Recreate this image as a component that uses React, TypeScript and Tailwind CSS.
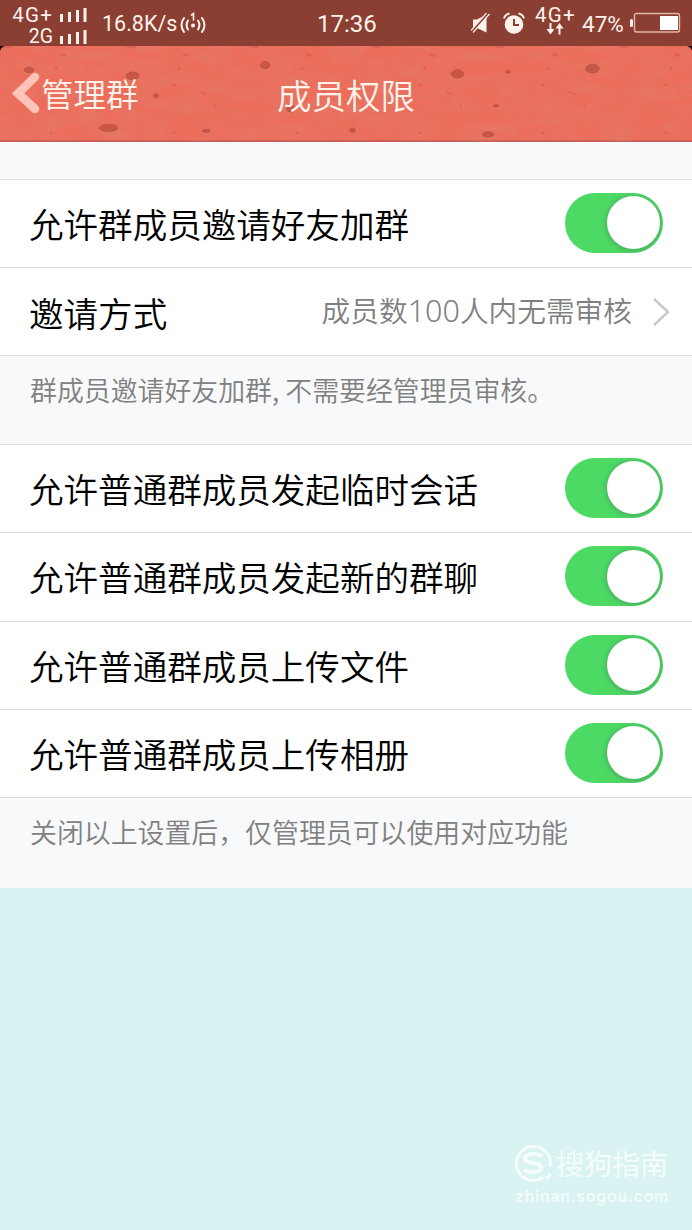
import React from "react";

const CJK = "font-['Noto_Sans_CJK_SC',sans-serif]";

const spots: [number, number, number, number][] = [
  [29, 70, 5, 3], [132.5, 76, 6.5, 4], [156, 96, 2.6, 2.3], [108.7, 128, 9.3, 3.8], [206, 131, 4.3, 1.6],
  [265, 65.3, 4.8, 3.8], [291, 109, 4.3, 3.3], [352.5, 130.3, 2.8, 2.4], [457.5, 74, 6.3, 4.3],
  [508, 72, 2.3, 1.6], [496, 106, 2.8, 1.4], [488, 134.5, 5.8, 2.8], [592.5, 68.7, 7, 4.5],
];

function Texture() {
  const tiles = [0, 123, 246, 369, 492, 615];
  return (
    <svg className="absolute inset-0" width="692" height="96" viewBox="0 46 692 96" aria-hidden="true">
      <defs>
        <filter id="grain" x="0" y="0" width="100%" height="100%">
          <feTurbulence type="fractalNoise" baseFrequency="0.03 0.08" numOctaves="3" seed="4" />
          <feColorMatrix values="0 0 0 0 0.65  0 0 0 0 0.3  0 0 0 0 0.25  0.4 0 0 0 -0.12" />
        </filter>
      </defs>
      <rect y="46" width="692" height="96" filter="url(#grain)" />
      <g fill="#c65443" opacity=".42">
        {tiles.map((x) => (
          <g key={x}>
            <ellipse cx={x + 63} cy="55" rx="3.5" ry="1.4" transform={`rotate(18 ${x + 63} 55)`} />
            <circle cx={x + 56} cy="68.5" r="1.6" />
            <circle cx={x + 51} cy="85" r="1.5" />
            <ellipse cx={x + 80} cy="93" rx="4.5" ry=".8" transform={`rotate(25 ${x + 80} 93)`} />
            <circle cx={x + 92} cy="106" r="1.2" />
            <circle cx={x + 51} cy="133" r="1.3" />
            <ellipse cx={x + 8} cy="47" rx="5" ry="1" />
          </g>
        ))}
      </g>
      {spots.map(([x, y, rx, ry]) => (
        <g key={`${x}-${y}`} opacity=".8">
          <ellipse cx={x} cy={y + 0.9} rx={rx + 0.3} ry={ry} fill="#f39079" opacity=".8" />
          <ellipse cx={x} cy={y} rx={rx} ry={ry} fill="#bf5041" stroke="#ab4a3c" strokeWidth=".7" />
        </g>
      ))}
      <path d="M0 46h5Q1 47 0 51Z" fill="#1c0505" />
      <path d="M692 46h-5q4 1 5 5Z" fill="#1c0505" />
    </svg>
  );
}

function Bars() {
  return (
    <svg className="shrink-0" width="28" height="14" viewBox="0 0 28 14" fill="#fff2ec">
      <rect x="0" y="6" width="3" height="8" />
      <rect x="8" y="4" width="3" height="10" />
      <rect x="16" y="2" width="3" height="12" />
      <rect x="23.5" y="0" width="3" height="14" />
    </svg>
  );
}

function StatusBar() {
  return (
    <div className="flex h-[46px] bg-[#8a3f32] font-[Roboto,sans-serif] text-[#fff2ec]">
      <div className="ml-[7px] w-[81px] pt-[4px]">
        <div className="flex h-[22px] items-center justify-end gap-[7px] text-[20.5px] leading-[22px] tracking-[1.2px]">
          <span>4G+</span><Bars />
        </div>
        <div className="flex h-[22px] items-center justify-end gap-[7px] text-[19.5px] leading-[22px]">
          <span>2G</span><Bars />
        </div>
      </div>
      <span className="ml-[14px] w-[76px] whitespace-nowrap pt-[11px] text-[21.5px] leading-[26px]">16.8K/s</span>
      <svg className="mt-[11px] ml-[1px]" width="28" height="24" viewBox="0 0 28 24" fill="none" stroke="#fff2ec" strokeWidth="2" strokeLinecap="round">
        <path d="M9 9.500q-2.800 4.500 0 9M5 7q-5 7 0 14M19 9.500q2.800 4.500 0 9M23 7q5 7 0 14" />
        <path d="M12.500 4 14.500 2.500V9" strokeWidth="1.600" />
        <circle cx="14" cy="14.500" r="2" fill="#fff2ec" stroke="none" />
      </svg>
      <span className="ml-[110px] w-[62px] pt-[11px] text-[24px] leading-[27px]">17:36</span>
      <svg className="mt-[13px] ml-[92px]" width="20" height="20" viewBox="0 0 20 20">
        <path d="M2 6.500h4l9.500-5v18L6 15H2Z" fill="#fff2ec" />
        <path d="M0 19.500 17 0" stroke="#8a3f32" strokeWidth="3" />
        <path d="M2 19.500 18.500 1M0 17.500 15.500 0" stroke="#fff2ec" strokeWidth="1.200" />
      </svg>
      <svg className="mt-[12px] ml-[12px]" width="22" height="23" viewBox="0 0 22 23">
        <circle cx="11" cy="12.500" r="9.300" fill="#fff2ec" />
        <path d="M1 6.500q1-4 5.500-5M21 6.500q-1-4-5.500-5" fill="none" stroke="#fff2ec" strokeWidth="1.800" />
        <path d="M11 7v6h5" fill="none" stroke="#8a3f32" strokeWidth="2" />
      </svg>
      <div className="ml-[10px] flex w-[43px] flex-col items-start pt-[5px]">
        <span className="text-[20.5px] leading-[20px] tracking-[1.3px]">4G+</span>
        <svg className="-mt-[2px] ml-[11px]" width="18" height="12" viewBox="0 0 18 12" fill="#fff2ec">
          <path d="M3.500 0h2v6h3L4.500 11.500 .5 6h3ZM12.500 11.500h2V5.500h3L13.500 0l-4 5.500h3Z" />
        </svg>
      </div>
      <span className="ml-[4px] w-[44px] pt-[11px] text-[22.5px] leading-[26px]">47%</span>
      <svg className="mt-[12px] ml-[4px]" width="52" height="22" viewBox="0 0 52 22">
        <rect x="0" y="7" width="3" height="8" rx="1.500" fill="#fff2ec" />
        <rect x="4.500" y="1.500" width="45" height="18.500" rx="2" fill="none" stroke="#e3b5aa" strokeWidth="1.400" />
        <rect x="30" y="4" width="18" height="14" fill="#fff" />
      </svg>
    </div>
  );
}

function Header() {
  return (
    <header className="relative h-[96px] border-b-2 border-[#cf5a4f] bg-[#ec6d5a]">
      <Texture />
      <div className={`${CJK} relative grid h-full grid-cols-3 items-center font-[350] text-[#fff3ec]`}>
        <div className="flex items-center pl-[10px]">
          <svg width="31" height="46" viewBox="0 0 31 46" fill="none">
            <path d="M25 7 8 23.500l17 15.500" stroke="#ffc4b7" strokeWidth="8.500" strokeLinecap="round" strokeLinejoin="miter" />
          </svg>
          <span className="whitespace-nowrap text-[32.5px] leading-[40px]">管理群</span>
        </div>
        <h1 className="whitespace-nowrap pt-[2px] text-center text-[34.5px] leading-[40px]">成员权限</h1>
      </div>
    </header>
  );
}

function Toggle() {
  return (
    <button role="switch" aria-checked="true" className="mb-[2px] flex h-[60px] w-[98px] shrink-0 items-center justify-end overflow-hidden rounded-full bg-[#4cd964] pr-[3px]">
      <span className="h-[53px] w-[53px] rounded-full bg-white shadow-[0_1px_5px_1px_rgba(70,90,80,0.35)]" />
    </button>
  );
}

function Row({ label, className = "", children }: { label: string; className?: string; children: React.ReactNode }) {
  return (
    <div className={`flex items-center justify-between border-t border-[#dcdddf] pl-[29px] ${className}`}>
      <span className="mb-[2px] whitespace-nowrap text-[34.55px] leading-[50px] font-[350] text-black">{label}</span>
      {children}
    </div>
  );
}

export default function App() {
  return (
    <div className="h-[1230px] w-[692px] overflow-hidden bg-[#d9f3f3]">
      <StatusBar />
      <Header />
      <main className={`${CJK} flex h-[746px] flex-col bg-[#f8f9fb] pt-[37px] font-normal`}>
        <section className="border-b border-[#dcdddf] bg-white">
          <Row label="允许群成员邀请好友加群" className="h-[88px] pr-[29px]"><Toggle /></Row>
          <Row label="邀请方式" className="h-[88px] pr-[22px] pt-[3px]">
            <div className="flex items-center gap-[20px] pb-[3px]">
              <span className="mb-[4px] flex items-baseline whitespace-nowrap text-[28.7px] leading-[42px] font-[350] text-[#808080]">
                成员数<span className="font-['Noto_Sans',sans-serif] text-[30.5px] font-light">100</span>人内无需审核
              </span>
              <svg width="18" height="30" viewBox="0 0 18 30" fill="none" stroke="#c7c7cc" strokeWidth="2.500">
                <path d="M2 2 16 15 2 28" />
              </svg>
            </div>
          </Row>
        </section>
        <p className="h-[88px] whitespace-nowrap pt-[14px] pl-[30px] text-[26.9px] leading-[40px] font-[350] text-[#808080]">群成员邀请好友加群, 不需要经管理员审核。</p>
        <section className="border-b border-[#dcdddf] bg-white">
          <Row label="允许普通群成员发起临时会话" className="h-[88px] pr-[29px]"><Toggle /></Row>
          <Row label="允许普通群成员发起新的群聊" className="h-[89px] pr-[29px]"><Toggle /></Row>
          <Row label="允许普通群成员上传文件" className="h-[88px] pr-[29px]"><Toggle /></Row>
          <Row label="允许普通群成员上传相册" className="h-[88px] pr-[29px]"><Toggle /></Row>
        </section>
        <p className="whitespace-nowrap pt-[14px] pl-[30px] text-[26.9px] leading-[40px] font-[350] text-[#808080]">关闭以上设置后，仅管理员可以使用对应功能</p>
      </main>
      <footer className="flex h-[342px] flex-col items-end justify-end pr-[24px] pb-[24px] text-white/75">
        <div className="flex items-center gap-[3px]">
          <svg width="38" height="40" viewBox="0 0 38 40" fill="none" stroke="currentColor">
            <path d="M28 34.500A17 17 0 1 1 35 24" strokeWidth="3" />
            <path d="m31 36 4.500-5" strokeWidth="3" />
            <path d="M27 14q-2-3-9-3-8 0-8 4.500 0 3.500 8 4.500 8 .8 8 4.500 0 4.500-8 4.500-7 0-9-3" strokeWidth="4" />
          </svg>
          <span className={`${CJK} text-[28px] leading-[40px] font-normal`}>搜狗指南</span>
        </div>
        <span className="mt-[3px] -mr-px font-[Inter,sans-serif] text-[16px] leading-[20px] font-medium tracking-[0.8px]">zhinan.sogou.com</span>
      </footer>
    </div>
  );
}
